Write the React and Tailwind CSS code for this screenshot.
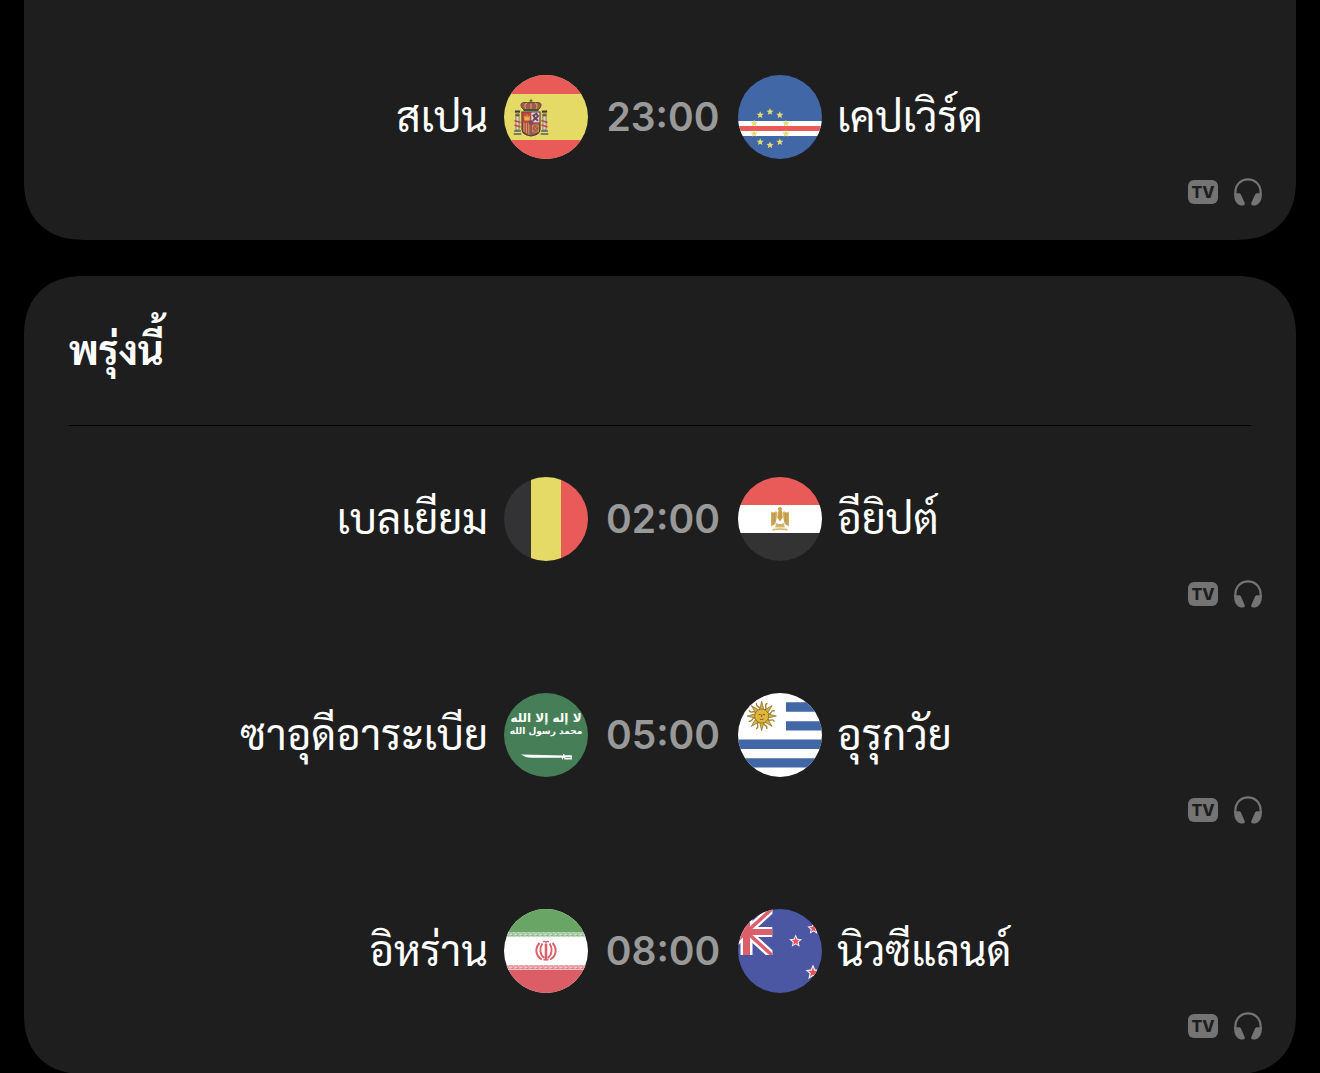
const BLUE = '#4267a6'
const RED = '#e95b59'
const YELLOW = '#e6da67'

function starPoints(cx, cy, r, inner = 0.4) {
  return Array.from({ length: 10 }, (_, i) => {
    const angle = (Math.PI / 5) * i - Math.PI / 2
    const radius = i % 2 ? r * inner : r
    return `${(cx + radius * Math.cos(angle)).toFixed(2)},${(cy + radius * Math.sin(angle)).toFixed(2)}`
  }).join(' ')
}

function Spain() {
  return (
    <>
      <path fill={YELLOW} d="M0 0h84v84H0z" />
      <path fill={RED} d="M0 0h84v19H0zM0 65h84v19H0z" />
      {/* pillars */}
      {[13.5, 40.5].map((x) => (
        <g key={x} transform={`translate(${x} 0)`}>
          <path fill="#d8d4c8" stroke="#6d5b55" strokeWidth=".7" d="M-1.6 41h3.2v14h-3.2z" />
          <path stroke="#c2474b" strokeWidth="1.8" d="M-3 45.5l6 2M-3 50l6 2" />
          <path fill="#3c3a3a" d="M-2.6 35.5h5.2v2.2h-5.2zM-2.2 39.2h4.4v1.6h-4.4z" />
          <path fill="#b08b3c" d="M-1.8 37.4h3.6v2h-3.6z" />
          <path stroke="#55606a" strokeWidth="1.3" d="M-3.4 56h6.8M-3.8 59h7.6" />
        </g>
      ))}
      {/* shield */}
      <path fill="#a9504f" stroke="#4b3a34" strokeWidth="1.2" d="M18 37h18v17c0 4-3 6-9 7-6-1-9-3-9-7z" />
      <path fill="#ddd2cf" d="M27.3 37.6h8.1v9.6h-8.1z" />
      <path stroke="#6b4560" strokeWidth="1.9" fill="none" d="M29 46l2-3-1.6-2.4 3-1.8 1.6 2.4-2 2 1.8 2.8" />
      <path fill="#c9403e" d="M18.6 37.6h8.2v9.6h-8.2z" />
      <path fill="#dfb64b" d="M20.3 45.5v-4.8h1.2v1.2h1v-2.4h1v2.4h1v-1.2h1.2v4.8z" />
      <path stroke="#d9a650" strokeWidth="1" d="M20 48v9M22.4 48v10.4M24.8 48v11.6" />
      <path stroke="#c79b47" strokeWidth=".8" fill="none" d="M28.5 50h6v7h-6zM28.5 50l6 7M34.5 50l-6 7" />
      <circle cx="27" cy="47.6" r="2" fill="#4b5f96" stroke="#a4383a" strokeWidth=".8" />
      <path fill="#67706c" d="M25 57.5l2-1.6 2 1.6-2 2.6z" />
      {/* crown */}
      <path
        fill="#a5574c"
        stroke="#4a4536"
        strokeWidth="1"
        d="M19.5 34.5c-4-4-3-7 1-7 2 0 4 .2 6.5 .2s4.5-.2 6.5-.2c4 0 5 3 1 7z"
      />
      <path fill="none" stroke="#d0a945" strokeWidth="1.1" d="M22 34c-2-3-1-5 1-6M27 34v-6M32 34c2-3 1-5-1-6" />
      <path stroke="#4a4536" strokeWidth="1" d="M27 24.3v4M25.5 25.8h3" />
      <path stroke="#3f5546" strokeWidth="2" d="M19.5 35.2h15" />
    </>
  )
}

function CapeVerde() {
  return (
    <>
      <path fill={BLUE} d="M0 0h84v84H0z" />
      <path fill="#fff" d="M0 46h84v15H0z" />
      <path fill={RED} d="M0 51h84v5H0z" />
      {Array.from({ length: 10 }, (_, i) => {
        const angle = (Math.PI / 5) * i - Math.PI / 2
        return (
          <polygon
            key={i}
            fill="#e3dc75"
            points={starPoints(32 + 16.7 * Math.cos(angle), 53.5 + 16.7 * Math.sin(angle), 3.7, 0.45)}
          />
        )
      })}
    </>
  )
}

function Belgium() {
  return (
    <>
      <path fill="#333335" d="M0 0h27v84H0z" />
      <path fill={YELLOW} d="M27 0h30v84H27z" />
      <path fill={RED} d="M57 0h27v84H57z" />
    </>
  )
}

function Egypt() {
  return (
    <>
      <path fill={RED} d="M0 0h84v28H0z" />
      <path fill="#fff" d="M0 28h84v28H0z" />
      <path fill="#333" d="M0 56h84v28H0z" />
      {/* eagle */}
      <path
        fill="#d3b266"
        d="M33 34.5c2 1.3 3.5 1 5-.2l1.500 1.200-1 6.500-1 5-4.500 2.500zM51 34.5c-2 1.3-3.5 1-5-.2l-1.500 1.200 1 6.500 1 5 4.500 2.500z"
      />
      <path stroke="#a98434" strokeWidth=".7" d="M35 36v11.5M36.8 36v9M47.2 36v9M49 36v11.5" />
      <path fill="#c89f48" d="M40.3 34.5c.8-1 .6-1.500-.5-2 .3-1.800 1.300-2.600 2.500-2.400 1.600.2 2 1.700 1.200 3.200l.5 1.200.7 6-2.700 4-2.700-4z" />
      <path fill="#d3b266" d="M38.5 46l2 1h3l2-1 1.500 4.500H37z" />
      <path fill="none" stroke="#d3b266" strokeWidth="1.5" d="M34.5 52.8q7.5-1.800 15 0" />
    </>
  )
}

function SaudiArabia() {
  return (
    <>
      <path fill="#467f57" d="M0 0h84v84H0z" />
      <g fill="#fff" fontFamily="'DejaVu Sans', sans-serif" fontWeight="700" textAnchor="middle">
        <text x="42" y="29" fontSize="12">لا إله إلا الله</text>
        <text x="42" y="41" fontSize="9">محمد رسول الله</text>
      </g>
      <path
        fill="#fff"
        d="M17 61.5l42 1v-1.5h1.5v1.2h6.5c1.3 0 1.5 1 .8 2v2.3h-7.5v-1.500H59v1.500h-1v-1.700H28c-5 0-8-1.300-11-3.300z"
      />
      <path stroke="#467f57" strokeWidth=".7" d="M61.5 64.5h5" />
    </>
  )
}

function Uruguay() {
  const rays = Array.from({ length: 16 }, (_, i) => i * 22.5)
  return (
    <>
      <path fill="#fff" d="M0 0h84v84H0z" />
      <path fill={BLUE} d="M48 9.3h36v9.4H48zM48 28.2h36v9.4H48zM0 46.5h84v9.4H0zM0 65.2h84v9.3H0z" />
      {rays.map((deg, i) => (
        <path
          key={deg}
          transform={`translate(23.7 23) rotate(${deg})`}
          fill={i % 2 ? 'none' : '#dcb23c'}
          stroke={i % 2 ? '#a3832f' : '#6e5c2b'}
          strokeWidth={i % 2 ? 1.3 : 0.6}
          d={i % 2 ? 'M0-6q2-2 .3-4t0-4' : 'M-2.4-5.5L0-14.7 2.4-5.5z'}
        />
      ))}
      <circle cx="23.7" cy="23" r="7" fill="#e0b63c" stroke="#7c662b" strokeWidth=".7" />
      <path
        fill="none"
        stroke="#6e5522"
        strokeWidth=".9"
        d="M20.5 21.6h2.2M24.8 21.6H27M23.7 21.5v2.5M21.8 26q1.9 1.2 3.8 0"
      />
    </>
  )
}

function Iran() {
  const cells = Array.from({ length: 17 }, (_, i) => i * 5)
  return (
    <>
      <path fill="#fff" d="M0 0h84v84H0z" />
      <path fill="#69a666" d="M0 0h84v23H0z" />
      <path fill="#db5e66" d="M0 61h84v23H0z" />
      <path fill="#cbe0ca" d="M0 23h84v5H0z" />
      <path fill="#f2c8cb" d="M0 56h84v5H0z" />
      {cells.map((x) => (
        <g key={x} fill="none" strokeWidth=".8">
          <path stroke="#79ae77" d={`M${x} 24h4v2.5h-2.5M${x} 27.5v-2`} />
          <path stroke="#dc6c73" d={`M${x} 57h4v2.5h-2.5M${x} 60.5v-2`} />
        </g>
      ))}
      {/* emblem */}
      <g fill="none" stroke="#d9616a">
        <path strokeWidth="2.6" d="M42 34.5v17" />
        <path strokeWidth="1.4" d="M39 32.8q1.6-1 3 .5 1.4-1.5 3-.5M39.5 51.300q2.500-2 5 0" />
        <path strokeWidth="1.9" d="M38.3 34.5c-3 5-2.5 11 2 14.5M45.7 34.5c3 5 2.5 11-2 14.5" />
        <path strokeWidth="2" d="M35.5 34c-4.500 5-4.500 12.500 2.300 16.500M48.500 34c4.500 5 4.500 12.500-2.300 16.500" />
      </g>
    </>
  )
}

function NewZealand() {
  const stars = [
    [57.7, 32.3, 6.8],
    [75.5, 19.5, 6.5],
    [75, 63.5, 8],
  ]
  return (
    <>
      <path fill="#4b57a3" d="M0 0h84v84H0z" />
      <svg width="34.5" height="46" viewBox="0 0 34.5 46">
        <path stroke="#fff" strokeWidth="8" d="M8.5 23L37-3M8.5 23L37 49M8.5 23L-20-3M8.5 23l-28.5 26" />
        <path fill="#fff" d="M2.5 0h12v46h-12zM0 18h34.5v10H0z" />
        <path stroke="#dc5f6b" strokeWidth="3.5" d="M8.5 23L37-3M8.5 23L35 47M8.5 23L-20-3M8.5 23l-28.5 26" />
        <path fill="#dc5f6b" d="M5 0h7v46H5zM0 20h34.5v6H0z" />
      </svg>
      {stars.map(([x, y, r]) => (
        <g key={y}>
          <polygon fill="#fff" points={starPoints(x, y, r, 0.45)} />
          <polygon fill="#e2525c" points={starPoints(x, y, r * 0.68)} />
        </g>
      ))}
    </>
  )
}

const today = [
  { home: 'สเปน', away: 'เคปเวิร์ด', time: '23:00', HomeFlag: Spain, AwayFlag: CapeVerde },
]

const tomorrow = [
  { home: 'เบลเยียม', away: 'อียิปต์', time: '02:00', HomeFlag: Belgium, AwayFlag: Egypt },
  { home: 'ซาอุดีอาระเบีย', away: 'อุรุกวัย', time: '05:00', HomeFlag: SaudiArabia, AwayFlag: Uruguay },
  { home: 'อิหร่าน', away: 'นิวซีแลนด์', time: '08:00', HomeFlag: Iran, AwayFlag: NewZealand },
]

function Flag({ children }) {
  return (
    <svg viewBox="0 0 84 84" className="w-[84px] h-[84px] rounded-full" aria-hidden="true">
      {children}
    </svg>
  )
}

function Headphones() {
  return (
    <svg viewBox="0 0 28 28" className="w-7 h-7" fill="#747474" aria-label="Audio">
      <path
        fill="none"
        stroke="#747474"
        strokeWidth="2.2"
        d="M1.4 18v-3.5C1.4 7 6.8 1.3 14 1.3S26.6 7 26.6 14.5V18"
      />
      <path d="M.3 15v3.5c0 3.5 2.2 7.5 5.7 8.8 2.3.8 5.6 0 4.7-2.3L6.900 16.600c-.6-1.300-2-1.700-3.200-1.300l-1.200.4V15zM27.700 15v3.500c0 3.500-2.200 7.500-5.700 8.800-2.300.8-5.600 0-4.700-2.300l3.800-8.400c.6-1.300 2-1.700 3.200-1.300l1.200.4V15z" />
    </svg>
  )
}

function MatchRow({ match }) {
  const { home, away, time, HomeFlag, AwayFlag } = match
  return (
    <li className="pt-[51px] pb-[34px] pl-10 pr-[34px]">
      <div className="grid grid-cols-[1fr_84px_150px_84px_1fr] items-center text-[42px] leading-[84px] whitespace-nowrap">
        <span className="pr-4 text-right">{home}</span>
        <Flag><HomeFlag /></Flag>
        <time className="text-center text-[39px] font-semibold text-[#999]">{time}</time>
        <Flag><AwayFlag /></Flag>
        <span className="pl-[15px]">{away}</span>
      </div>
      {/* Broadcast */}
      <div className="mt-[19px] flex items-center justify-end gap-4">
        <span className="w-[30px] h-6 rounded-md bg-[#747474] text-center text-[16px] leading-6 font-extrabold text-[#1e1e1e]">
          TV
        </span>
        <Headphones />
      </div>
    </li>
  )
}

export default function App() {
  return (
    <main className="min-h-screen bg-black px-6 flex flex-col gap-9 text-white font-[Inter,Sarabun,'Noto_Sans_Thai_Looped','Noto_Sans_Thai','Noto_Sans',sans-serif]">
      <section className="pt-6 bg-[#1e1e1e] rounded-b-[60px] [corner-shape:superellipse(1.2)]">
        <ul>
          {today.map((match) => (
            <MatchRow key={match.home} match={match} />
          ))}
        </ul>
      </section>

      <section className="-mb-px bg-[#1e1e1e] rounded-[60px] [corner-shape:superellipse(1.2)]">
        <h2 className="mx-[45px] border-b border-black text-[40px] leading-[149px] font-bold">พรุ่งนี้</h2>
        <ul>
          {tomorrow.map((match) => (
            <MatchRow key={match.home} match={match} />
          ))}
        </ul>
      </section>
    </main>
  )
}
